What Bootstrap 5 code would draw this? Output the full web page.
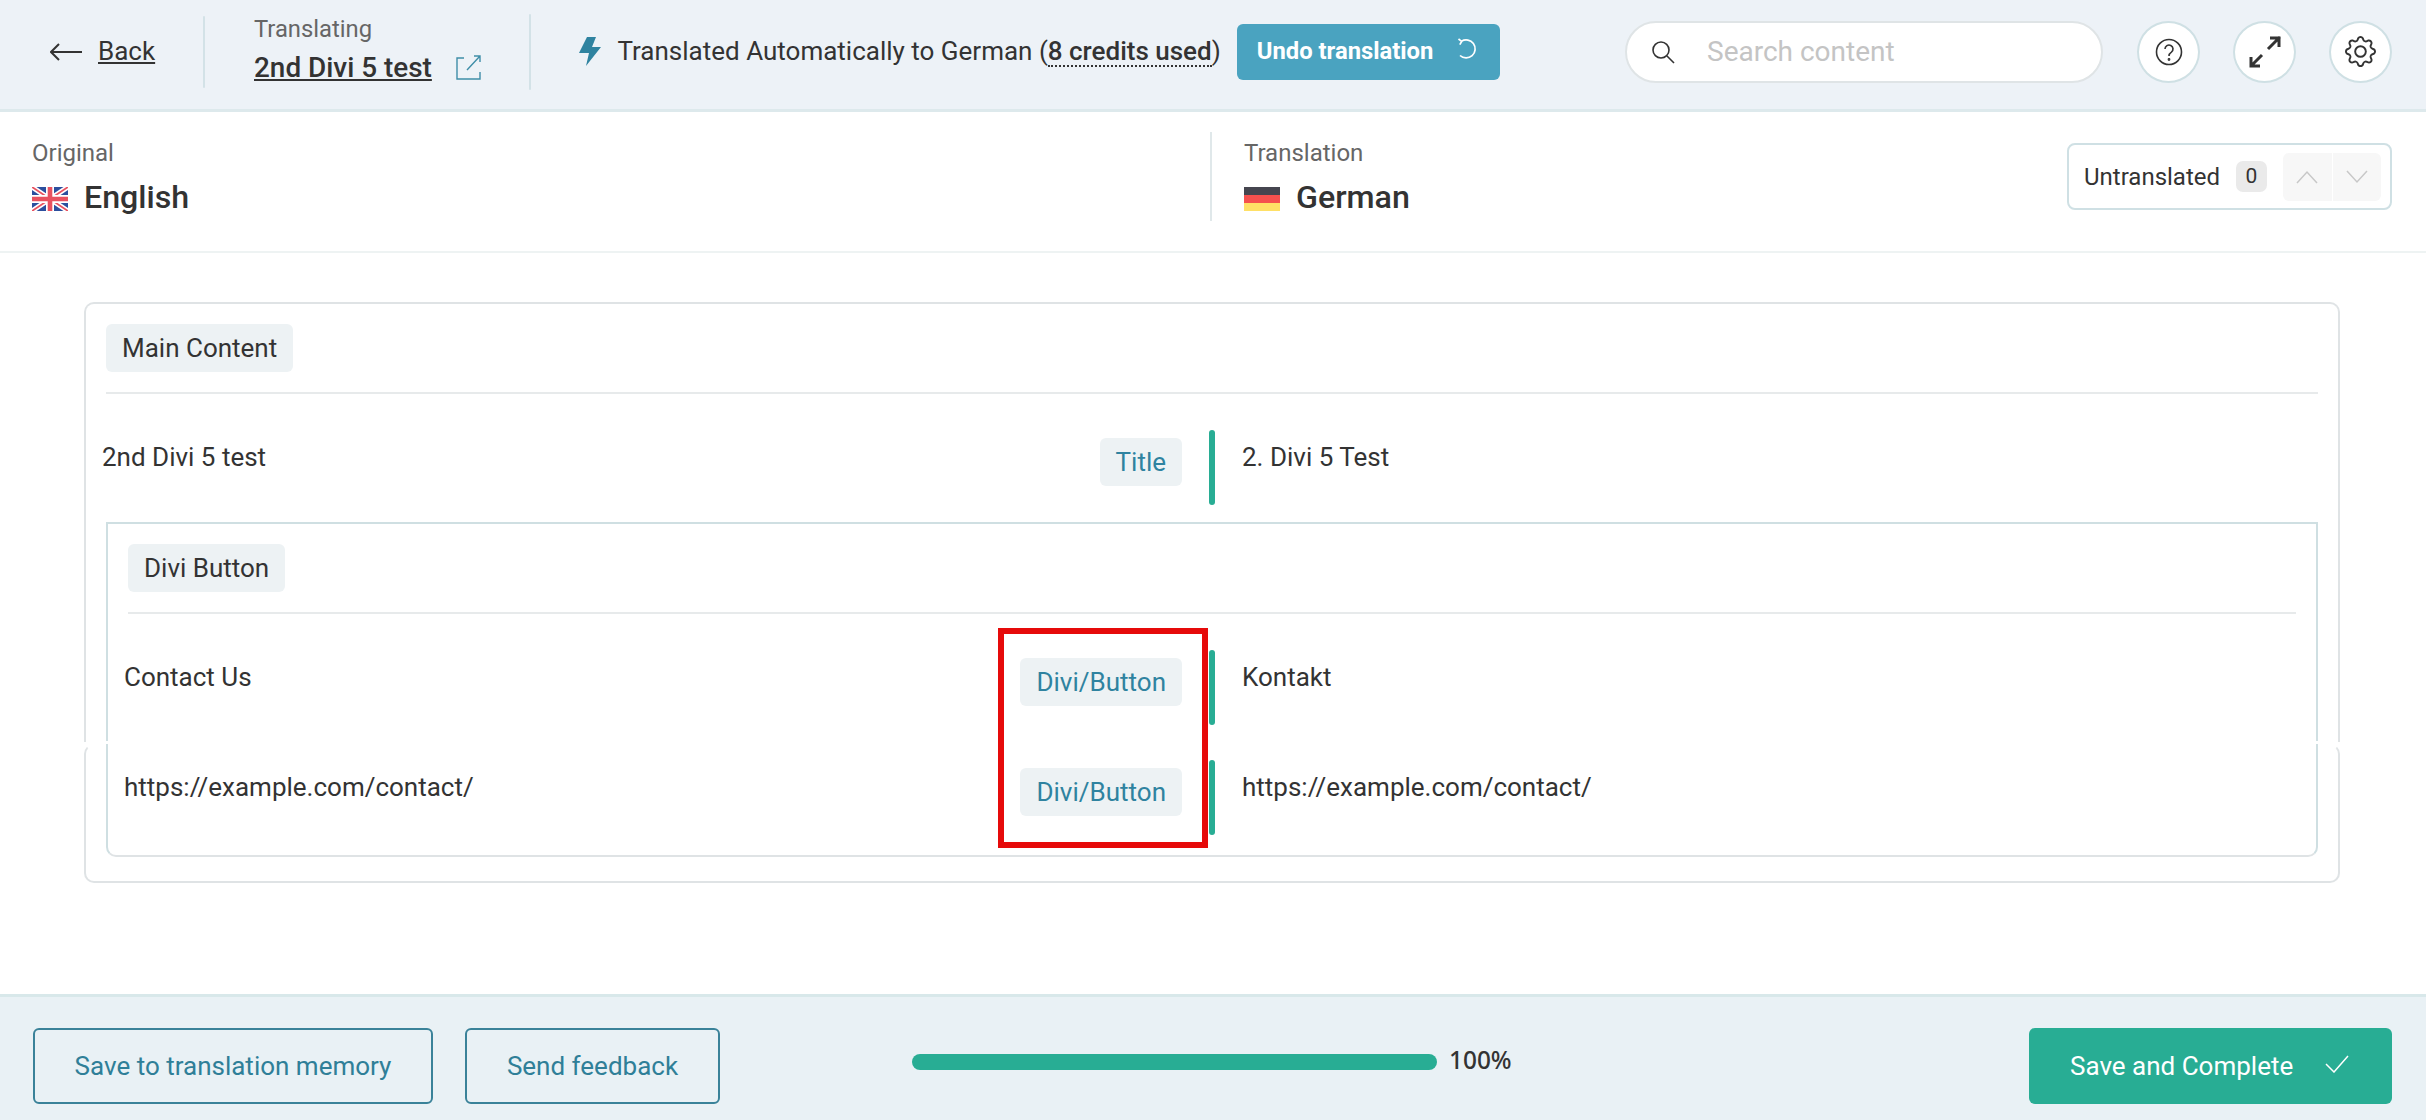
<!DOCTYPE html>
<html lang="en">
<head>
<meta charset="utf-8">
<title>Translation editor</title>
<link rel="stylesheet" href="https://cdn.jsdelivr.net/npm/bootstrap@5.3.0/dist/css/bootstrap.min.css">
<style>
html,body{height:100%}
body{font-family:Roboto,"Liberation Sans",sans-serif;font-size:26px;color:#333;background:#fff;overflow:hidden}
a{color:#333}
.top-bar{height:112px;background:#edf2f7;border-bottom:3px solid #dde9ec;padding:0 34px 6px 50px}
.back-link{width:153px}
.back-link svg{margin-right:16px}
.back-link a{font-size:26px}
.v-sep{width:2px;background:#d3e2e7;border-radius:2px;height:72px}
.v-sep-b{height:76px}
.doc-info{width:275px;padding-left:49px;margin-top:-1px;box-sizing:content-box}
.doc-label{font-size:23.8px;line-height:28px;color:#666}
.doc-name{font-size:27.9px;font-weight:500;line-height:38px;color:#333;margin-top:6px}
.doc-name svg{margin-left:24px;vertical-align:-3px}
.auto-note{margin-left:48px;font-size:26px;white-space:nowrap}
.auto-note svg{margin-right:16.5px}
.auto-note b{font-weight:500;border-bottom:2px dotted #333;line-height:28px;display:inline-block}
.undo-btn{margin-left:16px;width:263px;height:56px;background:#4aa3c0;color:#fff;font-size:23.8px;font-weight:700;border-radius:6px;border:0;padding:0 0 0 20px;justify-content:flex-start}
.undo-btn svg{margin-left:23px;margin-top:-6px}
.search-box{width:478px;height:62px;background:#fff;border:2px solid #dfe4e6;border-radius:31px;padding-left:24px;margin-right:34px}
.search-box input{border:0;outline:0;background:transparent;font:inherit;font-size:28px;margin-left:30px;width:380px;color:#333}
.search-box input::placeholder{color:#c4c4c4;opacity:1}
.round-btn{width:63px;height:62px;border-radius:50%;background:#fff;border:2px solid #cfe0e4;margin-left:33px;padding:0}
.round-btn:first-of-type{margin-left:0}
.lang-bar{height:141px;border-bottom:2px solid #eef3f3;padding:0 34px 10px 32px}
.lang-left{width:1178px}
.lang-sep{width:2px;height:89px;background:#e0e8ea}
.lang-right{padding-left:32px}
.lang-label{font-size:24px;line-height:30px;color:#666;margin-bottom:11px}
.lang-name{font-size:32.2px;font-weight:500;line-height:36px}
.lang-name svg{margin-right:16px;vertical-align:-3px}
.status-box{width:325px;height:67px;border:2px solid #cfe0e4;border-radius:8px;padding:0 9px 0 15px;font-size:24px}
.count-chip{width:31px;height:31px;background:#eaeaea;border-radius:7px;font-size:21px;margin-left:16px}
.nav-pair{margin-left:16px}
.nav-pair span{width:48.5px;height:48px;background:#f7f7f7}
.nav-pair span:first-child{border-radius:6px 0 0 6px;margin-right:1px}
.nav-pair span:last-child{border-radius:0 6px 6px 0}
.work-area{flex:1 1 auto;min-height:0}
.outer-a,.outer-b{margin-left:84px;width:2256px;background:#fff;border-left:2px solid #dfe3e5;border-right:2px solid #dfe3e5}
.outer-a{margin-top:49px;height:440px;border-top:2px solid #dfe3e5;border-radius:10px 10px 0 0;padding:20px 20px 0}
.outer-b{margin-top:2px;height:139px;border-top:2px solid transparent;border-bottom:2px solid #dfe3e5;border-radius:10px;padding:0 20px}
.inner-a,.inner-b{border-left:2px solid #cfdfe2;border-right:2px solid #cfdfe2;padding:0 20px 0}
.inner-a{border-top:2px solid #cfdfe2;height:219px;padding-top:20px}
.inner-b{height:113px;border-bottom:2px solid #dfe3e5;border-radius:0 0 10px 10px;margin-top:-2px}
.group-tag{display:inline-block;height:48px;line-height:48px;padding:0 16px;background:#edf2f4;border-radius:6px;font-size:26px}
.tag-rule{height:2px;background:#e7eaeb;margin-top:20px}
.seg-row{margin-left:-4px}
.seg-row-a{padding:36px 0 17px}
.seg-row-b{padding:36px 0 15px}
.seg-row-c{padding:16px 0 21px}
.seg-src{line-height:36px;padding-top:9px}
.seg-left-a{width:1080px}
.seg-left-b{width:1058px}
.type-tag{height:48px;line-height:48px;padding:0 16px;background:#edf2f4;border-radius:6px;color:#2f83a0;font-size:26px;margin:8px 0 0;white-space:nowrap}
.seg-bar{width:6px;height:75px;background:#28ad94;border-radius:3px}
.seg-gap-a{margin-left:27px}
.seg-trg{line-height:36px;padding-top:9px;margin-left:27px}
.mark-box{position:absolute;left:998px;top:628px;width:210px;height:220px;border:6px solid #e60a0a;pointer-events:none}
.foot-bar{height:126px;background:#e9f1f5;border-top:3px solid #d8e8ea;padding:31px 34px 16px 33px}
.foot-btn{height:76px;border:2px solid #3a8299;color:#2f7f98;background:transparent;border-radius:6px;font-size:26px;padding:0;white-space:nowrap}
.foot-a{width:400px;margin-right:32px}
.foot-b{width:255px}
.prog-wrap{margin-left:192px;margin-top:-8px}
.prog-track{width:525px;height:16px;background:#28ad94;border-radius:8px}
.prog-num{font-family:"Noto Sans",sans-serif;font-weight:500;font-size:24.4px;margin-left:12px;margin-bottom:3px}
.done-btn{width:363px;height:76px;background:#28ad94;color:#fff;border:0;border-radius:6px;font-size:26px;padding:0 0 0 41px;margin-left:auto;justify-content:flex-start;white-space:nowrap}
.done-btn svg{margin-left:32px;margin-top:-4px}
</style>
</head>
<body class="d-flex flex-column position-relative">
<header class="top-bar d-flex align-items-center">
  <div class="back-link d-flex align-items-center">
    <svg width="32" height="18" viewBox="0 0 32 18" fill="none" stroke="#333" stroke-width="2"><path d="M32 9H1M9 1 1 9l8 8"/></svg>
    <a href="#">Back</a>
  </div>
  <div class="v-sep"></div>
  <div class="doc-info">
    <div class="doc-label">Translating</div>
    <div class="doc-name"><a href="#">2nd Divi 5 test</a><svg width="25" height="25" viewBox="0 0 25 25" fill="none" stroke="#3f8ea8" stroke-width="1.4"><path d="M8 3H1v21h23v-7M11 15 24 1M18 1h6v6"/></svg></div>
  </div>
  <div class="v-sep v-sep-b"></div>
  <div class="auto-note d-flex align-items-center">
    <svg width="22" height="29" viewBox="0 0 22 29" fill="#2f83a0"><path d="M8 0h9l-4 10h9L7 29l3-13H0z"/></svg>
    <span>Translated Automatically to German (<b>8 credits used</b>)</span>
  </div>
  <button class="undo-btn btn d-flex align-items-center">Undo translation
    <svg width="22" height="22" viewBox="0 0 22 22" fill="none" stroke="#fff" stroke-width="1.7"><path d="M5.5 3.2A9 9 0 1 1 4 17.5M2.5 1l3.2 2.4L3.8 6.6"/></svg>
  </button>
  <div class="ms-auto d-flex align-items-center">
    <div class="search-box d-flex align-items-center">
      <svg width="24" height="24" viewBox="0 0 24 24" fill="none" stroke="#333" stroke-width="1.6"><circle cx="10" cy="10" r="8"/><path d="m16 16 7 7"/></svg>
      <input type="text" placeholder="Search content" aria-label="Search content">
    </div>
    <button class="round-btn btn d-flex align-items-center justify-content-center" aria-label="Help">
      <svg width="28" height="28" viewBox="0 0 28 28" fill="none" stroke="#333" stroke-width="1.6"><circle cx="14" cy="14" r="12.5"/><path d="M10 11a4 4 0 1 1 6.4 3.2c-1.5 1-2.4 1.8-2.4 3.8"/><circle cx="14" cy="21.5" r=".6"/></svg>
    </button>
    <button class="round-btn btn d-flex align-items-center justify-content-center" aria-label="Expand">
      <svg width="32" height="32" viewBox="0 0 32 32" fill="none" stroke="#333" stroke-width="3"><path d="M19 13 31 1M21 2h9v9M13 19 2 30M2 21v9h9"/></svg>
    </button>
    <button class="round-btn btn d-flex align-items-center justify-content-center" aria-label="Settings">
      <svg width="31" height="31" viewBox="0 0 16 16" fill="#333"><path d="M8 4.754a3.246 3.246 0 1 0 0 6.492 3.246 3.246 0 0 0 0-6.492zM5.754 8a2.246 2.246 0 1 1 4.492 0 2.246 2.246 0 0 1-4.492 0z"/><path d="M9.796 1.343c-.527-1.79-3.065-1.79-3.592 0l-.094.319a.873.873 0 0 1-1.255.52l-.292-.16c-1.64-.892-3.433.902-2.54 2.541l.159.292a.873.873 0 0 1-.52 1.255l-.319.094c-1.79.527-1.79 3.065 0 3.592l.319.094a.873.873 0 0 1 .52 1.255l-.16.292c-.892 1.64.901 3.434 2.541 2.54l.292-.159a.873.873 0 0 1 1.255.52l.094.319c.527 1.79 3.065 1.79 3.592 0l.094-.319a.873.873 0 0 1 1.255-.52l.292.16c1.64.893 3.434-.902 2.54-2.541l-.159-.292a.873.873 0 0 1 .52-1.255l.319-.094c1.79-.527 1.79-3.065 0-3.592l-.319-.094a.873.873 0 0 1-.52-1.255l.16-.292c.893-1.64-.902-3.433-2.541-2.54l-.292.159a.873.873 0 0 1-1.255-.52l-.094-.319zm-2.633.283c.246-.835 1.428-.835 1.674 0l.094.319a1.873 1.873 0 0 0 2.693 1.115l.291-.16c.764-.415 1.6.42 1.184 1.185l-.159.292a1.873 1.873 0 0 0 1.116 2.692l.318.094c.835.246.835 1.428 0 1.674l-.319.094a1.873 1.873 0 0 0-1.115 2.693l.16.291c.415.764-.42 1.6-1.185 1.184l-.291-.159a1.873 1.873 0 0 0-2.693 1.116l-.094.318c-.246.835-1.428.835-1.674 0l-.094-.319a1.873 1.873 0 0 0-2.692-1.115l-.292.16c-.764.415-1.6-.42-1.184-1.185l.159-.291A1.873 1.873 0 0 0 1.945 8.93l-.319-.094c-.835-.246-.835-1.428 0-1.674l.319-.094A1.873 1.873 0 0 0 3.06 4.377l-.16-.292c-.415-.764.42-1.6 1.185-1.184l.292.159a1.873 1.873 0 0 0 2.692-1.115l.094-.319z"/></svg>
    </button>
  </div>
</header>

<section class="lang-bar d-flex align-items-center">
  <div class="lang-left">
    <div class="lang-label">Original</div>
    <div class="lang-name">
      <svg width="36" height="24" viewBox="0 0 36 24"><rect width="36" height="24" fill="#2b4f9e"/><path d="M0 0l36 24M36 0 0 24" stroke="#fff" stroke-width="5"/><path d="M0 0l36 24M36 0 0 24" stroke="#e8515f" stroke-width="1.8"/><path d="M18 0v24M0 12h36" stroke="#fff" stroke-width="8"/><path d="M18 0v24M0 12h36" stroke="#e8515f" stroke-width="4.6"/></svg>English
    </div>
  </div>
  <div class="lang-sep"></div>
  <div class="lang-right flex-grow-1">
    <div class="lang-label">Translation</div>
    <div class="lang-name">
      <svg width="36" height="24" viewBox="0 0 36 24"><rect width="36" height="8" fill="#45454f"/><rect y="8" width="36" height="8" fill="#f5504e"/><rect y="16" width="36" height="8" fill="#ffe066"/></svg>German
    </div>
  </div>
  <div class="status-box d-flex align-items-center">
    <span>Untranslated</span>
    <span class="count-chip d-flex align-items-center justify-content-center">0</span>
    <div class="nav-pair d-flex">
      <span class="d-flex align-items-center justify-content-center"><svg width="24" height="14" viewBox="0 0 24 14" fill="none" stroke="#c8c8c8" stroke-width="1.5"><path d="M2 13 12 2l10 11"/></svg></span>
      <span class="d-flex align-items-center justify-content-center"><svg width="24" height="14" viewBox="0 0 24 14" fill="none" stroke="#c8c8c8" stroke-width="1.5"><path d="M2 1l10 11L22 1"/></svg></span>
    </div>
  </div>
</section>

<main class="work-area">
  <div class="outer-a">
    <span class="group-tag">Main Content</span>
    <div class="tag-rule"></div>
    <div class="seg-row seg-row-a d-flex">
      <div class="seg-left-a d-flex justify-content-between">
        <div class="seg-src">2nd Divi 5 test</div>
        <div class="type-tag">Title</div>
      </div>
      <div class="seg-bar seg-gap-a"></div>
      <div class="seg-trg">2. Divi 5 Test</div>
    </div>
    <div class="inner-a">
      <span class="group-tag">Divi Button</span>
      <div class="tag-rule"></div>
      <div class="seg-row seg-row-b d-flex">
        <div class="seg-left-b d-flex justify-content-between">
          <div class="seg-src">Contact Us</div>
          <div class="type-tag">Divi/Button</div>
        </div>
        <div class="seg-bar seg-gap-a"></div>
        <div class="seg-trg">Kontakt</div>
      </div>
    </div>
  </div>
  <div class="outer-b">
    <div class="inner-b">
      <div class="seg-row seg-row-c d-flex">
        <div class="seg-left-b d-flex justify-content-between">
          <div class="seg-src">https://example.com/contact/</div>
          <div class="type-tag">Divi/Button</div>
        </div>
        <div class="seg-bar seg-gap-a"></div>
        <div class="seg-trg">https://example.com/contact/</div>
      </div>
    </div>
  </div>
</main>

<footer class="foot-bar d-flex align-items-center">
  <button class="foot-btn foot-a btn">Save to translation memory</button>
  <button class="foot-btn foot-b btn">Send feedback</button>
  <div class="prog-wrap d-flex align-items-center">
    <div class="prog-track"></div>
    <span class="prog-num">100%</span>
  </div>
  <button class="done-btn btn d-flex align-items-center">Save and Complete
    <svg width="24" height="18" viewBox="0 0 24 18" fill="none" stroke="#fff" stroke-width="1.5"><path d="M1 9l8 8L23 1"/></svg>
  </button>
</footer>
<div class="mark-box"></div>
<script src="https://cdn.jsdelivr.net/npm/bootstrap@5.3.0/dist/js/bootstrap.bundle.min.js"></script>
</body>
</html>
